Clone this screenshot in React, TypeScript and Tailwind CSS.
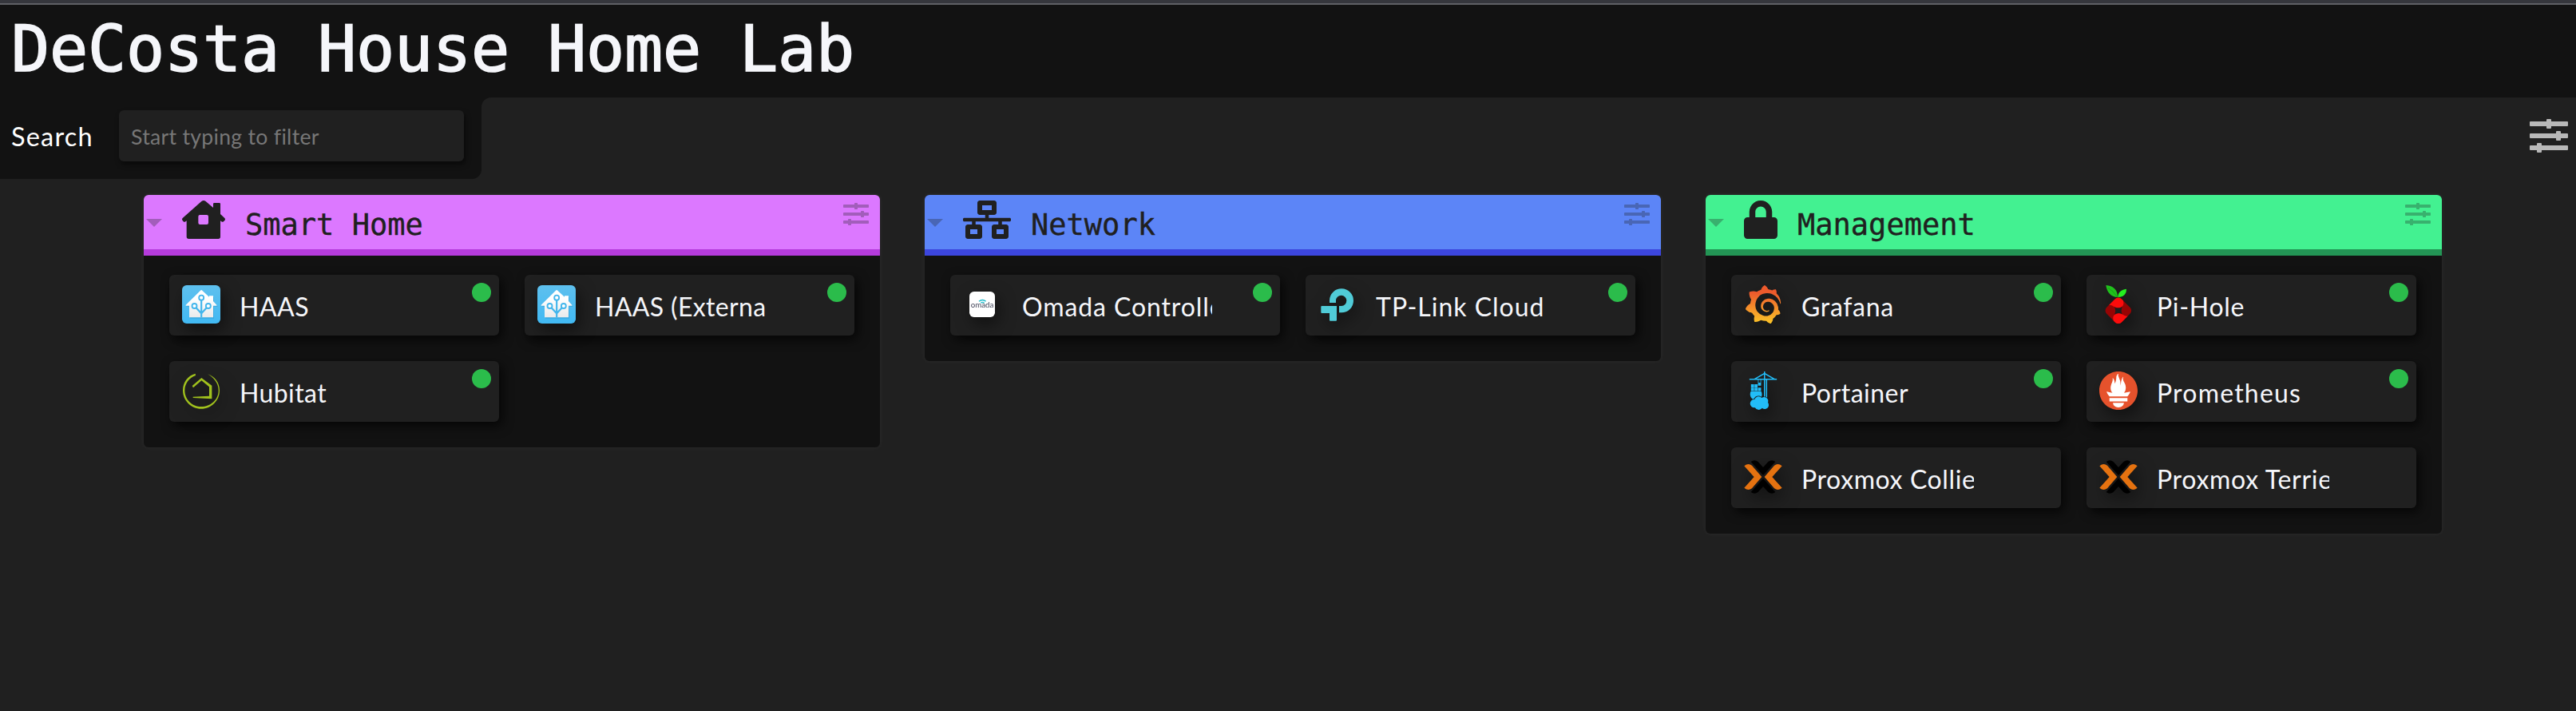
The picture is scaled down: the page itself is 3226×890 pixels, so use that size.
import type { ReactNode } from "react";
import { FaLock, FaNetworkWired } from "react-icons/fa";
import { SiGrafana, SiPortainer, SiPrometheus } from "react-icons/si";

function Sliders({ className }: { className: string }) {
  return (
    <svg viewBox="0 0 32 28" fill="currentColor" className={className}>
      <rect x="0" y="2" width="32" height="4" rx="0.7" />
      <rect x="0" y="12" width="32" height="4" rx="0.7" />
      <rect x="0" y="22" width="32" height="4" rx="0.7" />
      <rect x="14" y="0" width="4" height="8" rx="0.7" />
      <rect x="22" y="10" width="4" height="8" rx="0.7" />
      <rect x="6" y="20" width="4" height="8" rx="0.7" />
    </svg>
  );
}

function HouseIcon() {
  return (
    <svg viewBox="0 0 162 144" className="h-12 w-[54px]" fill="currentColor">
      <path
        fillRule="evenodd"
        d="M73 3Q81 -3 89 3L117 27V13Q117 9 121 9H140Q144 9 144 13V51L160 66Q164 71 160 75L156 79Q152 82 148 79L144 76V136Q144 144 136 144H25Q17 144 17 136V76L13 79Q9 82 5 79L2 75Q-2 71 2 66ZM67 54Q61 54 61 60V84Q61 90 67 90H93Q99 90 99 84V60Q99 54 93 54Z"
      />
    </svg>
  );
}

function HomeAssistant() {
  return (
    <svg viewBox="0 0 144 144" className="size-12">
      <defs>
        <linearGradient id="ha-bg" x1="0" y1="0" x2="0" y2="1">
          <stop offset="0" stopColor="#5ec0ee" />
          <stop offset="1" stopColor="#41b9f3" />
        </linearGradient>
        <linearGradient id="ha-house" x1="0" y1="0" x2="0" y2="1">
          <stop offset="0.3" stopColor="#ffffff" />
          <stop offset="1" stopColor="#e9eaeb" />
        </linearGradient>
      </defs>
      <rect width="144" height="144" rx="17" fill="url(#ha-bg)" />
      <path
        d="M69 22 Q72.500 18 76 22L102 46V40H117V60L130 74Q132 77 129 77H117V121H27V77H16Q12 77 14 74Z"
        fill="#1f86b8"
        opacity="0.3"
        transform="translate(3 4)"
      />
      <path
        d="M69 20Q72.500 16 76 20L102 44V40H117V60L130 74Q132 77 129 77H117V121H27V77H16Q12 77 14 74Z"
        fill="url(#ha-house)"
      />
      <g stroke="#43b6ec" strokeWidth="5.500" fill="#fff">
        <path d="M72.500 54V121M50 82L72.500 106L95 82" fill="none" strokeWidth="6.500" />
        <circle cx="72.500" cy="47" r="9" />
        <circle cx="46.500" cy="78" r="9" />
        <circle cx="98.500" cy="78" r="9" />
      </g>
    </svg>
  );
}

function Hubitat() {
  return (
    <svg viewBox="0 0 144 144" className="size-12" fill="#a1c21d">
      <path d="M50 8C22 15 3 40 3 71C3 109 34 140 72 140C110 140 141 109 141 71C141 42 122 18 96 10C118 21 137 44 137 71C137 106 107 132 72 132C38 132 10 105 10 71C10 46 26 24 51 15Z" />
      <path d="M38 54L73 24L112 53V103L41 99V95L102 92V58L73 34L42 61Z" />
    </svg>
  );
}

function Omada() {
  return (
    <svg viewBox="0 0 96 96" className="m-2 size-8">
      <rect width="96" height="96" rx="17" fill="#fff" />
      <g fill="none" stroke="#20bccb" strokeWidth="4">
        <path d="M36 37Q49 26 62 37" />
        <path d="M43 43Q49 37 56 43" />
      </g>
      <text
        x="5"
        y="60"
        textLength="86"
        lengthAdjust="spacingAndGlyphs"
        fontSize="27"
        fill="#414458"
        fontFamily="Lato, sans-serif"
      >
        omada
      </text>
    </svg>
  );
}

function TpLink() {
  return (
    <svg viewBox="0 0 144 144" className="size-12" fill="#50cbd7">
      <path d="M42 66V57A45 45 0 1 1 87 103H78V78H87A20 20 0 1 0 66 57V66Z" />
      <path d="M13 78H69V131Q69 134 66 134H45Q42 134 42 131V105H13Q10 105 10 102V81Q10 78 13 78Z" />
    </svg>
  );
}

function Grafana() {
  return (
    <>
      <svg className="absolute size-0">
        <defs>
          <linearGradient id="grafana-fill" x1="0" y1="0" x2="0" y2="1">
            <stop offset="0.200" stopColor="#ee5a2c" />
            <stop offset="1" stopColor="#fbc528" />
          </linearGradient>
        </defs>
      </svg>
      <SiGrafana className="size-12" fill="url(#grafana-fill)" />
    </>
  );
}

const PIHOLE_SWIRL = "M30 76C48 70 54 84 66 85C84 86 95 76 90 60L92 40H30Z";

function PiHole() {
  return (
    <svg viewBox="0 0 144 144" className="size-12">
      <defs>
        <clipPath id="pihole-body">
          <rect x="32" y="56" width="79" height="79" rx="17" transform="rotate(45 71.5 95.5)" />
        </clipPath>
      </defs>
      <path d="M25 0C52 2 69 17 69 45C43 45 28 25 25 0Z" fill="#20c11c" />
      <path d="M102 14C80 17 70 28 70 45C91 44 102 34 102 14Z" fill="#24ee1f" />
      <path d="M33 10Q52 20 68 45" stroke="#12800f" strokeWidth="1.500" fill="none" />
      <g clipPath="url(#pihole-body)">
        <rect x="20" y="44" width="104" height="104" fill="#960404" />
        <path d={PIHOLE_SWIRL} fill="#fa0c0c" />
        <path d={PIHOLE_SWIRL} fill="#fa0c0c" transform="rotate(180 71.5 95.5)" />
        <path d="M57 82Q72 90 86 81Q80 96 86 109Q71 101 57 110Q64 95 57 82Z" fill="#1d1d1d" />
      </g>
    </svg>
  );
}

function Prometheus() {
  return (
    <span className="block size-12 rounded-full bg-[radial-gradient(circle,#fff_0_66%,transparent_67%)]">
      <SiPrometheus className="size-12 text-[#e6522c]" />
    </span>
  );
}

function Proxmox() {
  return (
    <svg viewBox="0 0 144 144" className="size-12">
      <g fill="#000">
        <path d="M26 15Q40 4 53 15L72 36L91 15Q105 4 118 15L72 66Z" />
        <path d="M26 129Q40 140 53 129L72 108L91 129Q105 140 118 129L72 78Z" />
      </g>
      <g fill="#e57210">
        <path d="M1 31Q16 18 30 29L67 72L30 115Q16 126 1 113L38 72Z" />
        <path d="M143 31Q128 18 114 29L77 72L114 115Q128 126 143 113L106 72Z" />
      </g>
    </svg>
  );
}

interface Item {
  label: string;
  icon: ReactNode;
  text: string;
  up?: boolean;
}

interface Section {
  title: string;
  icon: ReactNode;
  header: string;
  items: Item[];
}

const SECTIONS: Section[] = [
  {
    title: "Smart Home",
    icon: <HouseIcon />,
    header: "bg-[#dc78ff] border-[#b53bdc]",
    items: [
      { label: "HAAS", icon: <HomeAssistant />, up: true, text: "ml-6 w-[216px] tracking-[0.5px]" },
      { label: "HAAS (External)", icon: <HomeAssistant />, up: true, text: "ml-6 w-[216px] tracking-[0.35px]" },
      { label: "Hubitat", icon: <Hubitat />, up: true, text: "ml-6 w-[216px] tracking-[0.4px]" },
    ],
  },
  {
    title: "Network",
    icon: <FaNetworkWired className="h-12 w-[60px]" />,
    header: "bg-[#5c85f7] border-[#3c46de]",
    items: [
      { label: "Omada Controller", icon: <Omada />, up: true, text: "ml-[26px] w-[238px] tracking-[0.9px]" },
      { label: "TP-Link Cloud", icon: <TpLink />, up: true, text: "ml-6 w-[216px] tracking-[1px]" },
    ],
  },
  {
    title: "Management",
    icon: <FaLock className="h-12 w-[42px]" />,
    header: "bg-[#43f191] border-[#239555]",
    items: [
      { label: "Grafana", icon: <Grafana />, up: true, text: "ml-6 w-[216px] tracking-[0.7px]" },
      { label: "Pi-Hole", icon: <PiHole />, up: true, text: "ml-6 w-[216px] tracking-[0.7px]" },
      {
        label: "Portainer",
        icon: <SiPortainer className="size-12 text-[#22bdf8]" />,
        up: true,
        text: "ml-6 w-[216px] tracking-[0.5px]",
      },
      { label: "Prometheus", icon: <Prometheus />, up: true, text: "ml-6 w-[216px] tracking-[1.2px]" },
      { label: "Proxmox Collie", icon: <Proxmox />, text: "ml-6 w-[216px] tracking-[0.6px]" },
      { label: "Proxmox Terrier", icon: <Proxmox />, text: "ml-6 w-[216px] tracking-[0.7px]" },
    ],
  },
];

function Card({ item }: { item: Item }) {
  return (
    <a className="relative flex h-[76px] items-start rounded-md bg-[#202020] pl-4 pt-[13px] shadow-[4px_5px_14px_rgba(0,0,0,0.7)]">
      <span className="shrink-0 drop-shadow-[4px_8px_10px_rgba(0,0,0,0.5)]">{item.icon}</span>
      <span
        className={`mt-[7px] shrink-0 overflow-hidden whitespace-nowrap text-[32px] leading-10 text-[#f5f6fa] ${item.text}`}
      >
        {item.label}
      </span>
      {item.up && <span className="absolute right-[10px] top-[10px] size-6 rounded-full bg-[#2bbc4b]" />}
    </a>
  );
}

function Panel({ section }: { section: Section }) {
  return (
    <section className="w-[922px] overflow-hidden rounded-md bg-[#121212] shadow-[0_0_6px_rgba(255,255,255,0.06)]">
      <header className={`flex h-[76px] items-start border-b-8 text-[#202020] ${section.header}`}>
        <svg viewBox="0 0 20 10" className="ml-[3px] mt-[30px] h-[10px] w-5 opacity-30" fill="currentColor">
          <path d="M0 0H20L10 10Z" />
        </svg>
        <span className="ml-[25px] mt-[7px]">{section.icon}</span>
        <h3 className="ml-[25px] mt-[16px] flex-1 font-['DejaVu_Sans_Mono',monospace] text-[37px] leading-[44px] [-webkit-text-stroke:0.4px_currentColor]">
          {section.title}
        </h3>
        <Sliders className="mr-[14px] mt-[10px] h-7 w-8 opacity-30" />
      </header>
      <div className="grid grid-cols-2 gap-8 px-8 pb-8 pt-6">
        {section.items.map((item) => (
          <Card key={item.label} item={item} />
        ))}
      </div>
    </section>
  );
}

export default function App() {
  return (
    <div className="min-h-[890px] w-full overflow-hidden bg-[#202020] font-[Lato,'Open_Sans',sans-serif]">
      <div className="h-[6px] border-b-2 border-[#5f6065] bg-[#35363c]" />
      <header className="h-[116px] bg-[#121212] pl-[14px]">
        <h1 className="pt-[12px] font-['DejaVu_Sans_Mono',monospace] text-[80px] leading-[88px] tracking-[-0.16px] text-[#f5f6fa] [-webkit-text-stroke:1.6px_currentColor]">
          DeCosta House Home Lab
        </h1>
      </header>
      <div className="flex h-[102px] bg-[#121212]">
        <form className="flex w-[603px] items-start pl-[14px] pt-4">
          <label className="w-[135px] pt-[13px] text-[32.500px] leading-10 tracking-[1.2px] text-white">Search</label>
          <input
            placeholder="Start typing to filter"
            className="h-16 w-[432px] rounded-md bg-[#202020] px-[15px] pt-0.5 text-[26.600px] tracking-[0.3px] text-white shadow-[2px_4px_6px_rgba(0,0,0,0.5)] placeholder:text-[#777777]"
          />
        </form>
        <div className="flex flex-1 justify-end rounded-tl-xl bg-[#202020] pr-[10px] pt-[27px]">
          <Sliders className="h-[42px] w-12 text-[#b8b8b8]" />
        </div>
      </div>
      <div className="relative h-0">
        <svg viewBox="0 0 12 12" className="absolute -top-3 left-[591px] size-3 fill-[#202020]">
          <path d="M12 0V12H0A12 12 0 0 0 12 0Z" />
        </svg>
      </div>
      <main className="flex items-start justify-center gap-14 pl-3 pt-5">
        {SECTIONS.map((section) => (
          <Panel key={section.title} section={section} />
        ))}
      </main>
    </div>
  );
}
